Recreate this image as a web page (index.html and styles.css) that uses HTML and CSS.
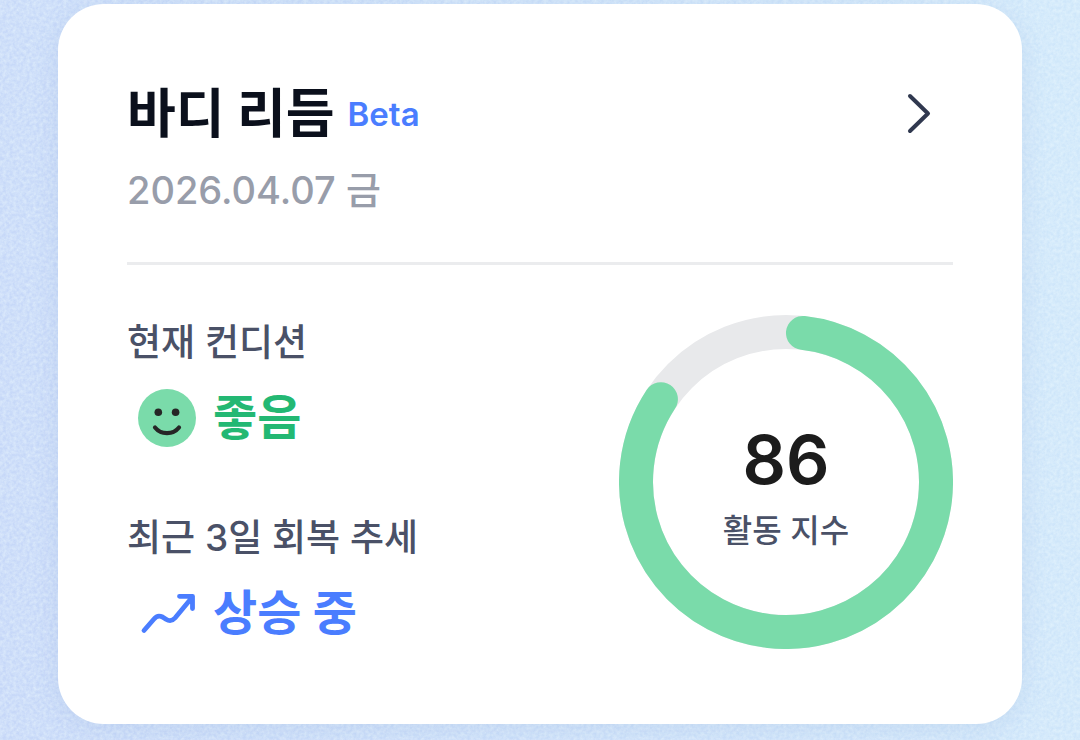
FILE: index.html
```
<!DOCTYPE html>
<html lang="ko">
  <head>
    <meta charset="UTF-8" />
    <meta name="viewport" content="width=device-width, initial-scale=1.0" />
    <title>바디 리듬</title>
    <link rel="stylesheet" href="styles.css" />
  </head>
  <body>
    <main class="rhythm-card">
      <header class="card-header">
        <div class="title-row">
          <h1 class="title">바디 리듬</h1>
          <span class="beta">Beta</span>
          <a class="more-link" href="#" aria-label="자세히 보기">
            <svg viewBox="0 0 48 48" aria-hidden="true">
              <path d="M5 6 23 23.500 5 41" />
            </svg>
          </a>
        </div>
        <p class="date">2026.04.07 금</p>
      </header>

      <div class="card-body">
        <div class="status-list">
          <section class="status">
            <h2 class="status-label">현재 컨디션</h2>
            <p class="status-value good">
              <svg class="status-icon" viewBox="0 0 58 58" aria-hidden="true">
                <circle cx="29" cy="29" r="29" fill="#7adbaa" />
                <circle cx="20.300" cy="23.300" r="3.800" fill="#262626" />
                <circle cx="37.600" cy="23.300" r="3.800" fill="#262626" />
                <path
                  d="M17 38.500C23 46 35 46 41 38.500"
                  fill="none"
                  stroke="#262626"
                  stroke-width="4.200"
                  stroke-linecap="round"
                />
              </svg>
              좋음
            </p>
          </section>

          <section class="status">
            <h2 class="status-label">최근 3일 회복 추세</h2>
            <p class="status-value rising">
              <svg class="status-icon" viewBox="0 0 58 58" aria-hidden="true">
                <path
                  d="M6 46.500 16 35Q19.500 30.500 24.500 33L28 35.300Q33 38.500 37 34L54 13.500M41.500 12.300H54.500V24.500"
                  fill="none"
                  stroke="#4a7dff"
                  stroke-width="4.800"
                  stroke-linecap="round"
                  stroke-linejoin="round"
                />
              </svg>
              상승 중
            </p>
          </section>
        </div>

        <div class="score">
          <svg class="score-ring" viewBox="0 0 334 334" aria-hidden="true">
            <circle class="ring-track" cx="167" cy="167" r="150" />
            <circle
              class="ring-value"
              cx="167"
              cy="167"
              r="150"
              pathLength="360"
              stroke-dasharray="297 360"
              transform="rotate(-83.500 167 167)"
            />
          </svg>
          <div class="score-text">
            <strong class="score-number">86</strong>
            <span class="score-label">활동 지수</span>
          </div>
        </div>
      </div>
    </main>
  </body>
</html>
```
FILE: styles.css
```
* {
  box-sizing: border-box;
}

body {
  margin: 0;
  min-height: 100vh;
  padding: 4px 58px 16px;
  font-family: Inter, "Noto Sans CJK KR", sans-serif;
  /* fine paper grain over the pale blue gradient */
  background:
    url("data:image/svg+xml,%3Csvg xmlns='http://www.w3.org/2000/svg' width='240' height='240'%3E%3Cfilter id='n'%3E%3CfeTurbulence type='fractalNoise' baseFrequency='.3' numOctaves='3' stitchTiles='stitch'/%3E%3CfeColorMatrix values='0 0 0 0 .87 0 0 0 0 .97 0 0 0 0 1 .8 0 0 0 -.2'/%3E%3C/filter%3E%3Crect width='240' height='240' filter='url(%23n)'/%3E%3C/svg%3E"),
    linear-gradient(80deg, #c6d7f8, #cfe7fa);
}

h1,
h2,
p {
  margin: 0;
}

.rhythm-card {
  padding: 78px 69px 75px;
  background: #fff;
  border-radius: 46px;
  box-shadow: 0 4px 24px rgba(110, 140, 200, 0.16);
}

.card-header {
  padding-bottom: 48px;
  border-bottom: 3px solid #ebecee;
}

.title-row {
  display: flex;
  align-items: center;
  height: 64px;
}

.title {
  font-size: 53px;
  font-weight: 700;
  line-height: 64px;
  color: #0b101c;
}

.beta {
  margin-left: 13px;
  font-size: 33px;
  font-weight: 600;
  line-height: 64px;
  color: #4a7dff;
}

.more-link {
  width: 48px;
  height: 48px;
  margin-left: auto;
}

.more-link svg {
  display: block;
  fill: none;
  stroke: #30384f;
  stroke-width: 4;
  stroke-linecap: round;
  stroke-linejoin: round;
}

.date {
  margin-top: 20px;
  font-size: 38px;
  font-weight: 500;
  line-height: 48px;
  color: #989daa;
}

.card-body {
  display: flex;
  justify-content: space-between;
  align-items: center;
  padding-top: 50px;
}

.status-list {
  display: grid;
  gap: 64px;
}

.status-label {
  font-size: 37px;
  font-weight: 500;
  line-height: 48px;
  color: #4a5167;
}

.status-value {
  display: flex;
  align-items: center;
  gap: 17px;
  margin-top: 19px;
  padding-left: 11px;
  font-size: 48px;
  font-weight: 700;
  line-height: 64px;
}

.status-icon {
  width: 58px;
  height: 58px;
}

.good {
  color: #23b873;
}

.rising {
  color: #4a7dff;
}

.score {
  display: grid;
  place-items: center;
  width: 334px;
}

.score-ring,
.score-text {
  grid-area: 1 / 1;
}

.score-ring {
  display: block;
  width: 100%;
}

.ring-track,
.ring-value {
  fill: none;
  stroke-width: 34;
}

.ring-track {
  stroke: #e8e9eb;
}

.ring-value {
  stroke: #7adbaa;
  stroke-linecap: round;
}

.score-text {
  display: flex;
  flex-direction: column;
  align-items: center;
  padding-top: 8px;
}

.score-number {
  font-size: 68px;
  font-weight: 600;
  line-height: 84px;
  color: #1c1c1c;
}

.score-label {
  margin-top: 6px;
  font-size: 32px;
  font-weight: 500;
  line-height: 48px;
  color: #4a5167;
}
```
